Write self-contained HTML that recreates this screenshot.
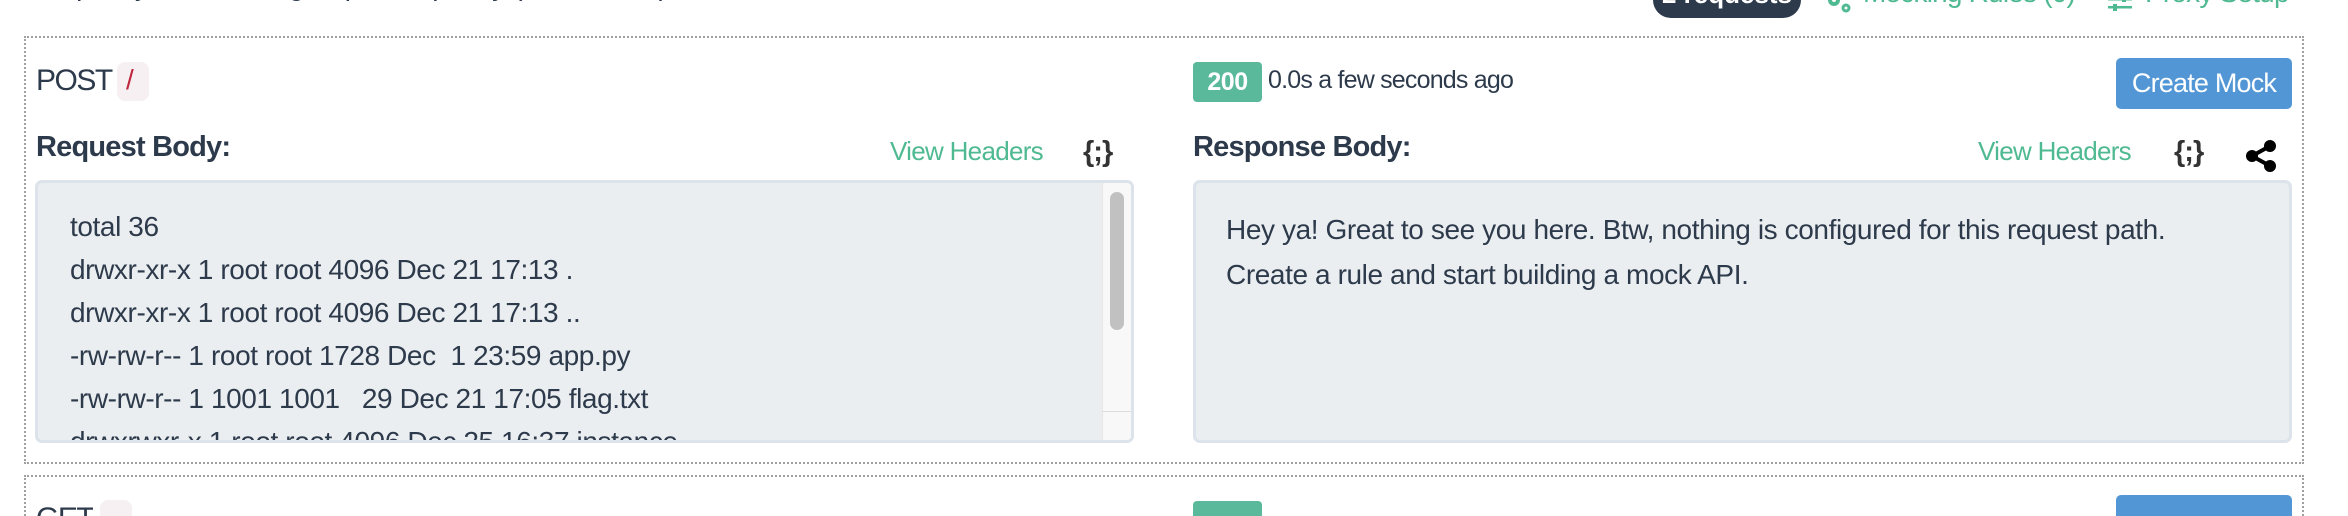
<!DOCTYPE html>
<html><head><meta charset="utf-8"><style>
*{margin:0;padding:0;box-sizing:border-box}
html,body{width:2348px;height:516px;overflow:hidden}
body{background:#fff;font-family:"Liberation Sans",sans-serif;color:#2d3a4b}
#w{position:relative;width:2348px;height:516px;overflow:hidden}
.a{position:absolute;white-space:nowrap}
.box{position:absolute;border:2px dotted #a0a0a0}
.ta{position:absolute;background:#ebeef0;border:3px solid #dce3ea;border-radius:7px;overflow:hidden}
.green{color:#4fb992}
.badge{position:absolute;background:#f7f0f3;border-radius:8px}
.code{font-size:28px;letter-spacing:-0.4px}
</style></head><body><div id="w">
<div class="a" style="left:40px;top:-30px;font-size:28px;letter-spacing:-0.4px">Inspect your incoming requests quickly (newest first)</div>
<div class="a" style="left:1653px;top:-20px;width:148px;height:38px;background:#2d3a4b;border-radius:18px;color:#fff;font-size:26px;font-weight:bold;text-align:center;line-height:28px">2 requests</div>
<svg class="a" style="left:1825px;top:-6px" width="28" height="20" viewBox="0 0 28 20"><circle cx="9" cy="6" r="6" fill="#4fb992"/><circle cx="21" cy="14" r="4.5" fill="#4fb992"/><circle cx="9" cy="6" r="2" fill="#fff"/><circle cx="21" cy="14" r="1.5" fill="#fff"/></svg>
<div class="a green" style="left:1863px;top:-23px;font-size:28px;letter-spacing:-0.8px">Mocking Rules (0)</div>
<svg class="a" style="left:2108px;top:-4px" width="24" height="16" viewBox="0 0 24 16"><rect x="0" y="2" width="24" height="2.5" fill="#4fb992"/><rect x="0" y="10" width="24" height="2.5" fill="#4fb992"/><rect x="14" y="0" width="4" height="6" fill="#4fb992"/><rect x="5" y="8" width="4" height="7" fill="#4fb992"/></svg>
<div class="a green" style="left:2145px;top:-23px;font-size:28px;letter-spacing:-0.8px">Proxy Setup</div>

<div class="box" style="left:24px;top:36px;width:2280px;height:428px"></div>
<div class="a" style="left:36px;top:62px;font-size:30px;line-height:38px;letter-spacing:-1.5px">POST</div>
<div class="badge" style="left:117px;top:62px;width:32px;height:39px"></div>
<div class="a" style="left:126px;top:64px;font-size:28px;color:#c0283f">/</div>
<div class="a" style="left:36px;top:131px;font-size:29px;font-weight:bold;letter-spacing:-0.8px">Request Body:</div>
<div class="a green" style="left:890px;top:136px;font-size:26px;letter-spacing:-0.7px">View Headers</div>
<div class="a" style="left:1083px;top:136px;font-size:29px;font-weight:bold;letter-spacing:-1px;color:#333">{;}</div>

<div class="ta" style="left:35px;top:180px;width:1099px;height:263px">
<div class="a code" style="left:32px;top:22px;line-height:43px">total 36<br>drwxr-xr-x 1 root root 4096 Dec 21 17:13 .<br>drwxr-xr-x 1 root root 4096 Dec 21 17:13 ..<br>-rw-rw-r-- 1 root root 1728 Dec &nbsp;1 23:59 app.py<br>-rw-rw-r-- 1 1001 1001 &nbsp;&nbsp;29 Dec 21 17:05 flag.txt<br>drwxrwxr-x 1 root root 4096 Dec 25 16:37 instance</div>
<div class="a" style="left:1064px;top:0;width:32px;height:228px;background:#f8f8f8;border-left:1px solid #e6e6e6"></div>
<div class="a" style="left:1072px;top:9px;width:14px;height:138px;background:#c1c1c1;border-radius:7px"></div>
<div class="a" style="left:1064px;top:228px;width:32px;height:35px;background:#f8f8f8;border-left:1px solid #e6e6e6;border-top:1px solid #ddd"></div>
</div>

<div class="a" style="left:1193px;top:62px;width:69px;height:40px;background:#5bb99b;border-radius:4px;color:#fff;font-size:25px;font-weight:bold;text-align:center;line-height:40px;letter-spacing:-0.5px">200</div>
<div class="a" style="left:1268px;top:66px;font-size:25px;letter-spacing:-0.8px">0.0s a few seconds ago</div>
<div class="a" style="left:2116px;top:58px;width:176px;height:51px;background:#5296d5;border-radius:5px;color:#fff;font-size:27px;text-align:center;line-height:51px;letter-spacing:-0.8px">Create Mock</div>
<div class="a" style="left:1193px;top:131px;font-size:29px;font-weight:bold;letter-spacing:-0.8px">Response Body:</div>
<div class="a green" style="left:1978px;top:136px;font-size:26px;letter-spacing:-0.7px">View Headers</div>
<div class="a" style="left:2174px;top:136px;font-size:29px;font-weight:bold;letter-spacing:-1px;color:#333">{;}</div>
<svg class="a" style="left:2244px;top:140px" width="34" height="32" viewBox="0 0 34 32"><line x1="26" y1="6" x2="8" y2="16" stroke="#000" stroke-width="4"/><line x1="26" y1="26" x2="8" y2="16" stroke="#000" stroke-width="4"/><circle cx="26" cy="6" r="6" fill="#000"/><circle cx="26" cy="26" r="6" fill="#000"/><circle cx="8" cy="16" r="6" fill="#000"/></svg>
<div class="ta" style="left:1193px;top:180px;width:1099px;height:263px">
<div class="a code" style="left:30px;top:24px;line-height:45px">Hey ya! Great to see you here. Btw, nothing is configured for this request path.<br>Create a rule and start building a mock API.</div>
</div>

<div class="box" style="left:24px;top:475px;width:2280px;height:41px;border-bottom:none"></div>
<div class="a" style="left:36px;top:500px;height:16px;overflow:hidden;font-size:30px;line-height:38px;letter-spacing:-1.5px">GET</div>
<div class="badge" style="left:100px;top:500px;width:32px;height:16px;border-radius:8px 8px 0 0"></div>
<div class="a" style="left:1193px;top:501px;width:69px;height:15px;background:#5bb99b;border-radius:4px 4px 0 0"></div>
<div class="a" style="left:2116px;top:495px;width:176px;height:21px;background:#5296d5;border-radius:5px 5px 0 0"></div>
</div></body></html>
